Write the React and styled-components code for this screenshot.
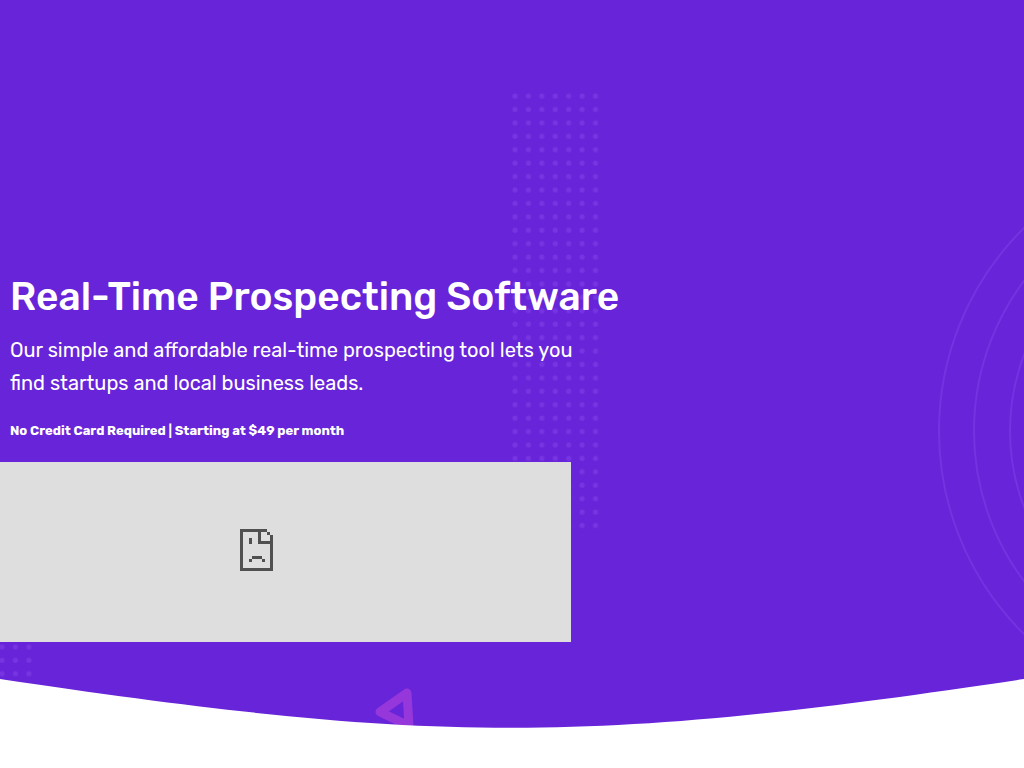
import React from "react";
import styled, { createGlobalStyle } from "styled-components";

const GlobalStyle = createGlobalStyle`
  body {
    margin: 0;
    background: #fff;
    font-family: Rubik, Roboto, sans-serif;
    overflow-x: hidden;
  }
`;

const Hero = styled.section`
  position: relative;
  display: flex;
  flex-direction: column;
  gap: 37px;
  overflow: hidden;
  padding-top: 272px;
  background: #6824d9;
  color: #fff;
`;

/* Dots, rings and triangle sit behind the content */
const Backdrop = styled.svg`
  position: absolute;
  inset: 0;
  width: 100%;
  height: 100%;
`;

const Curve = styled.svg`
  position: relative;
  display: block;
  width: 100%;
  height: 89px;
`;

const Content = styled.div`
  position: relative;
  display: flex;
  flex-direction: column;
  gap: 22px;
  max-width: 640px;
`;

const Copy = styled.div`
  display: flex;
  flex-direction: column;
  padding: 0 10px;
`;

const Title = styled.h1`
  margin: 0 0 12px;
  font-size: 39px;
  font-weight: 500;
  line-height: 50px;
`;

const Lead = styled.p`
  max-width: 590px;
  margin: 0 0 22px;
  font-size: 20px;
  line-height: 33px;
`;

const Note = styled.p`
  margin: 0;
  font-size: 13px;
  font-weight: 700;
  line-height: 18px;
`;

const Embed = styled.div`
  display: flex;
  align-items: center;
  justify-content: center;
  box-sizing: border-box;
  max-width: 571px;
  height: 180px;
  padding: 0 58px 4px 0;
  background: #dedede;
`;

const DotGrid = ({ id, cols, rows, x, y }) => (
  <svg x={x} y={y} width={cols * 13.42} height={rows * 13.42}>
    <defs>
      <pattern id={id} width="13.42" height="13.42" patternUnits="userSpaceOnUse">
        <circle cx="3" cy="3" r="2.5" fill="#7635e1" />
      </pattern>
    </defs>
    <rect width="100%" height="100%" fill={`url(#${id})`} />
  </svg>
);

const Rings = () => (
  <svg x="100%" y="431" overflow="visible">
    <g fill="none" stroke="#7432e0" strokeWidth="2">
      <circle cx="200" r="285" />
      <circle cx="200" r="250" />
      <circle cx="200" r="214" />
    </g>
  </svg>
);

const SadPage = () => (
  <svg
    width="33"
    height="42"
    viewBox="0 0 33 42"
    fill="#505050"
    shapeRendering="crispEdges"
    role="img"
    aria-label="Content unavailable"
  >
    <path d="M0 0h27v3h-6v9h9V6h3v36H0zM3 3v36h27V15H18V3z" fillRule="evenodd" />
    <path d="M27 3h3v3h-3zM9 9h3v6H9zM12 27h10v3H12zM9 30h3v3H9zM22 30h3v3h-3z" />
  </svg>
);

const App = () => (
  <>
    <GlobalStyle />
    <Hero>
      <Backdrop aria-hidden="true">
        <DotGrid id="dots-main" cols={7} rows={33} x="50%" y="93" />
        <DotGrid id="dots-corner" cols={3} rows={5} x="-1" y="617" />
        <Rings />
        <path
          d="M407 693 380 712l29 14z"
          fill="none"
          stroke="#9537da"
          strokeWidth="9"
          strokeLinejoin="round"
        />
      </Backdrop>

      <Content>
        <Copy>
          <Title>Real-Time Prospecting Software</Title>
          <Lead>
            Our simple and affordable real-time prospecting tool lets you find
            startups and local business leads.
          </Lead>
          <Note>No Credit Card Required | Starting at $49 per month</Note>
        </Copy>
        <Embed>
          <SadPage />
        </Embed>
      </Content>

      <Curve viewBox="0 0 1024 89" preserveAspectRatio="none" aria-hidden="true">
        <path d="M0 0C435 65 589 65 1024 0V89H0z" fill="#fff" />
      </Curve>
    </Hero>
  </>
);

export default App;
